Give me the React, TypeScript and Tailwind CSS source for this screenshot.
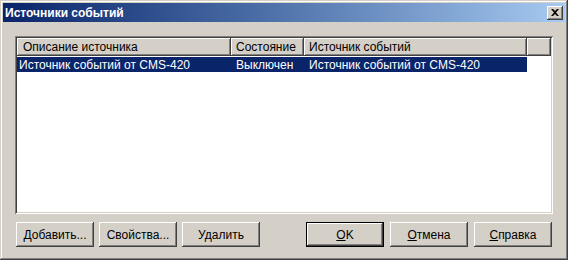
import React from 'react'

const raised =
  'shadow-[inset_-1px_-1px_#404040,inset_1px_1px_#ffffff,inset_-2px_-2px_#808080,inset_2px_2px_#d4d0c8]'

function Btn({ children, def }: { children: React.ReactNode; def?: boolean }) {
  return (
    <div
      className={
        'w-[78px] h-[25px] flex items-center justify-center bg-[#d4d0c8] text-[12px] text-black ' +
        (def
          ? 'border border-black shadow-[inset_-1px_-1px_#404040,inset_1px_1px_#ffffff,inset_-2px_-2px_#808080]'
          : raised)
      }
    >
      {children}
    </div>
  )
}

export default function App() {
  return (
    <div
      className="w-[568px] h-[260px] bg-[#d4d0c8] p-[3px] flex flex-col shadow-[inset_-1px_-1px_#404040,inset_1px_1px_#d4d0c8,inset_-2px_-2px_#808080,inset_2px_2px_#ffffff] overflow-hidden"
      style={{ fontFamily: '"Liberation Sans", Arial, sans-serif' }}
    >
      {/* title bar */}
      <div className="h-[19px] flex items-center justify-between bg-linear-to-r from-[#0a246a] to-[#a6caf0] pl-[2px] pr-[2px]">
        <span className="text-white font-bold text-[12px] leading-none">Источники событий</span>
        <div className="w-[16px] h-[14px] bg-[#d4d0c8] flex items-center justify-center shadow-[inset_-1px_-1px_#404040,inset_1px_1px_#ffffff,inset_-2px_-2px_#808080]">
          <svg width="8" height="7" viewBox="0 0 8 7">
            <path d="M0 0h2l2 2 2-2h2L5 3.5 8 7H6L4 5 2 7H0l3-3.5z" fill="#000" />
          </svg>
        </div>
      </div>

      <div className="flex-1 flex flex-col px-[12px] pt-[14px]">
        {/* list view */}
        <div className="h-[178px] bg-white p-[2px] shadow-[inset_1px_1px_#808080,inset_-1px_-1px_#ffffff,inset_2px_2px_#404040,inset_-2px_-2px_#d4d0c8]">
          <div className="flex h-[18px] text-[12px] text-black bg-[#d4d0c8]">
            <div className={'w-[214px] flex items-center pl-[6px] ' + raised}>Описание источника</div>
            <div className={'w-[73px] flex items-center pl-[5px] ' + raised}>Состояние</div>
            <div className={'w-[223px] flex items-center pl-[5px] ' + raised}>Источник событий</div>
            <div className={'flex-1 ' + raised}></div>
          </div>
          <div className="mt-[1px] flex w-[510px] h-[15px] items-center bg-[#0a246a] text-white text-[12px]">
            <div className="w-[214px] pl-[2px]">Источник событий от CMS-420</div>
            <div className="w-[73px] pl-[5px]">Выключен</div>
            <div className="w-[223px] pl-[5px]">Источник событий от CMS-420</div>
          </div>
        </div>

        {/* buttons */}
        <div className="mt-[8px] flex justify-between pl-[1px] pr-[1px]">
          <div className="flex gap-[5px]">
            <Btn>Добавить...</Btn>
            <Btn>Свойства...</Btn>
            <Btn>Удалить</Btn>
          </div>
          <div className="flex gap-[6px]">
            <Btn def>
              <span className="underline">O</span>K
            </Btn>
            <Btn>
              <span className="underline">О</span>тмена
            </Btn>
            <Btn>
              <span className="underline">С</span>правка
            </Btn>
          </div>
        </div>
      </div>
    </div>
  )
}
